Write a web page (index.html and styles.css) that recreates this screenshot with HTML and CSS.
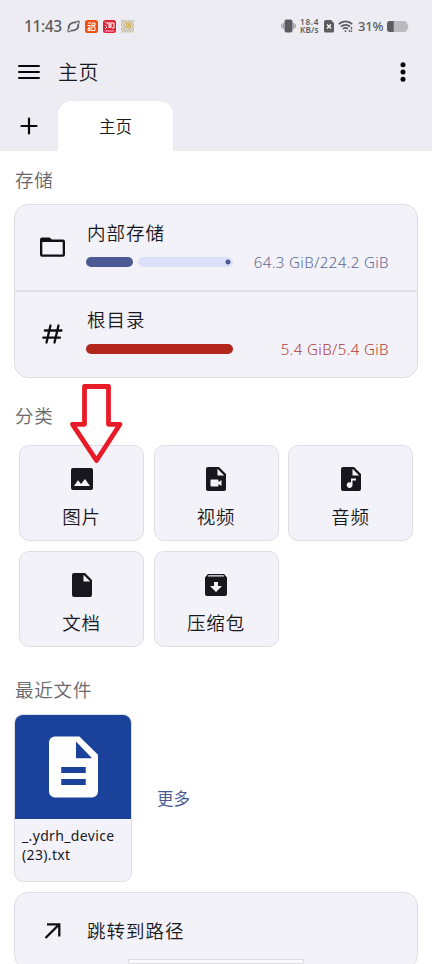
FILE: index.html
```html
<!DOCTYPE html>
<html lang="zh-CN">
<head>
<meta charset="utf-8">
<meta name="viewport" content="width=device-width">
<title>主页</title>
<link rel="stylesheet" href="styles.css">
</head>
<body>
<div class="screen">
  <header class="header">
    <div class="status">
      <span class="clock">11:43</span>
      <svg class="s-orbit" width="13" height="13" viewBox="0 0 14 14" fill="none" stroke="#5c5c60"><path d="M2 9.500C1 5 5 2 10 2.500M12 4.500C13 9 9 12 4 11.500" stroke-width="1.900"/><path d="M1.800 12.800C.5 12.800.5 11.500 1.500 9.500M12.400 4.500C13.500 2.500 13.500 1.200 12.200 1.200 11.500 1.200 10.700 1.800 10 2.500M1.800 12.800C2.500 12.800 3.200 12.200 4 11.500" stroke-width="1.100"/></svg>
      <svg class="s-app" width="13" height="13" viewBox="0 0 13 13"><rect width="13" height="13" rx="2.500" fill="#ec5012"/><g fill="none" stroke="#fff"><path d="M3 3h3M2.500 5.500h3L3.500 8M7 3h3v2.500H7zM6 7h4v3.500H6zM3 8.500h2v2H3z"/></g></svg>
      <svg class="s-app" width="13" height="13" viewBox="0 0 13 13"><rect width="13" height="13" rx="2.500" fill="#df2638"/><path d="M2 2l1.500 1M2 5l1.500 1M2 9l2-2M5 2L4 4M5 3h6v5H9M5 5h4M5 7h4M7 3v5" fill="none" stroke="#fff"/><path d="M2 11h9" stroke="#f48ba6" stroke-width="1.500"/></svg>
      <svg class="s-app" width="13" height="13" viewBox="0 0 13 13"><rect width="13" height="13" rx="1" fill="#e2ddd0"/><g fill="none" stroke="#a99c80" stroke-dasharray="1 1.300 1.500 1"><path d="M0 1h13M1 3h12M0 5h13M1.500 7h12M0 9h13M1 11h12"/></g><path d="M5 4h4v3H5" fill="none" stroke="#d7b838" stroke-width="1.300"/></svg>
      <span class="spacer"></span>
      <svg width="15" height="14" viewBox="0 0 15 14" fill="#5c5c60"><rect x="3.500" y=".5" width="8" height="13" rx="2"/><path d="M1.800 4h1v6h-1zM12.200 4h1v6h-1z" opacity=".7"/><path d="M.2 5.500h1v3h-1zM13.800 5.500h1v3h-1z" opacity=".7"/></svg>
      <svg class="speed" width="19" height="18" viewBox="0 0 19 18"><text x="0" y="8" textLength="18.500">18.4</text><text x="0" y="16" textLength="18.500">KB/s</text></svg>
      <svg class="s-sim" width="10" height="13" viewBox="0 0 10 13"><path d="M2 0h5l3 3v8a1.500 1.500 0 0 1-1.500 1.500h-7A1.500 1.500 0 0 1 0 11V2a2 2 0 0 1 2-2z" fill="#5c5c60"/><path d="M3 4.500l4 4M7 4.500l-4 4" stroke="#fff" stroke-width="1.400"/></svg>
      <svg class="s-wifi" width="16" height="13" viewBox="0 0 16 13" fill="none" stroke="#5c5c60" stroke-width="1.700"><path d="M.8 4.200a9.500 9.500 0 0 1 13.400 0M2.900 6.700a6.500 6.500 0 0 1 9.200 0M5 9a3.500 3.500 0 0 1 5 0"/><path d="M6 10.500h3L7.500 12.500z" fill="#5c5c60" stroke="none"/><path d="M13.500 7v2.500M13.500 10.500V12M11.500 10v2" stroke-width="1.300"/></svg>
      <span class="percent">31%</span>
      <svg class="s-batt" width="22" height="11" viewBox="0 0 22 11"><path d="M3 0h14.500Q20 0 20 2.500l1.200 1.500v3L20 8.500Q20 11 17.500 11H3a3 3 0 0 1-3-3V3a3 3 0 0 1 3-3z" fill="#bababf"/><path d="M3 0h3.700v11H3a3 3 0 0 1-3-3V3a3 3 0 0 1 3-3z" fill="#5c5c60"/></svg>
    </div>
    <div class="toolbar">
      <svg width="22" height="16" viewBox="0 0 22 16" stroke="#08080c" stroke-width="2.200" stroke-linecap="round"><path d="M1.100 2h19.800M1.100 8h19.800M1.100 14h19.800"/></svg>
      <h1 class="title">主页</h1>
      <svg class="more-icon" width="6" height="20" viewBox="0 0 6 20" fill="#08080c"><circle cx="3" cy="2.700" r="2.500"/><circle cx="3" cy="10" r="2.500"/><circle cx="3" cy="17.300" r="2.500"/></svg>
    </div>
    <div class="tabs">
      <svg class="add" width="18" height="18" viewBox="0 0 18 18" stroke="#08080c" stroke-width="2.200" stroke-linecap="round"><path d="M9 1.500v15M1.500 9h15"/></svg>
      <div class="tab">主页</div>
    </div>
  </header>

  <main class="content">
    <h2 class="section">存储</h2>
    <div class="storage">
      <div class="volume">
        <svg class="volume-icon" width="25" height="20" viewBox="0 0 25 20"><path d="M2 .6h7.500L12 2.500H23a2 2 0 0 1 2 2v13.300a2 2 0 0 1-2 2H2a2 2 0 0 1-2-2V2.500A2 2 0 0 1 2 .6zM2.300 4.900V17.600h20.400V4.900z" fill="#101014" fill-rule="evenodd"/></svg>
        <div class="volume-body">
          <div class="label">内部存储</div>
          <div class="usage">
            <div class="meter"><span class="used"></span><span class="free"></span></div>
            <span class="amount">64.3 GiB/224.2 GiB</span>
          </div>
        </div>
      </div>
      <div class="volume volume-full">
        <svg class="volume-icon" width="25" height="20" viewBox="0 0 25 20" fill="none" stroke="#101014" stroke-width="2.300" stroke-linecap="round"><path d="M10.500 1.500L6.500 18.500M18.500 1.500l-4 17M4.800 6.500H21.500M3.300 13.700H20"/></svg>
        <div class="volume-body">
          <div class="label">根目录</div>
          <div class="usage">
            <div class="meter"><span class="used"></span></div>
            <span class="amount">5.4 GiB/5.4 GiB</span>
          </div>
        </div>
      </div>
    </div>

    <div class="category-head">
      <h2 class="section">分类</h2>
      <svg class="pointer" width="56" height="82" viewBox="0 0 56 82" fill="none" stroke="#e81c28" stroke-width="4.800" stroke-linejoin="round"><path d="M15.500 3.500h24v37.800H51L27.500 77.500 3.500 41.300h12z"/></svg>
    </div>
    <div class="grid">
      <div class="tile"><svg viewBox="0 0 24 24"><path fill="#17171d" fill-rule="evenodd" d="M3 1h18a2 2 0 0 1 2 2v18a2 2 0 0 1-2 2H3a2 2 0 0 1-2-2V3a2 2 0 0 1 2-2zM4 19h16l-5-7-4 5-3-3.800z"/></svg><span>图片</span></div>
      <div class="tile"><svg viewBox="0 0 24 24"><path fill="#17171d" fill-rule="evenodd" d="M4 0h11l7 7v15a2 2 0 0 1-2 2H4a2 2 0 0 1-2-2V2a2 2 0 0 1 2-2zM13.500 1.800V8.500h6.700zM7.500 12.500a1 1 0 0 0-1 1v5a1 1 0 0 0 1 1h6a1 1 0 0 0 1-1v-1.500l3 2v-6l-3 2v-1.500a1 1 0 0 0-1-1z"/></svg><span>视频</span></div>
      <div class="tile"><svg viewBox="0 0 24 24"><path fill="#17171d" fill-rule="evenodd" d="M4 0h11l7 7v15a2 2 0 0 1-2 2H4a2 2 0 0 1-2-2V2a2 2 0 0 1 2-2zM13.500 1.800V8.500h6.700zM12 11.500v4a2.900 2.900 0 1 0 1.500 2.500v-4.500H17v-2z"/></svg><span>音频</span></div>
      <div class="tile"><svg viewBox="0 0 24 24"><path fill="#17171d" fill-rule="evenodd" d="M4 0h11l7 7v15a2 2 0 0 1-2 2H4a2 2 0 0 1-2-2V2a2 2 0 0 1 2-2zM13.500 1.800V8.500h6.700z"/></svg><span>文档</span></div>
      <div class="tile"><svg viewBox="0 0 24 24"><path fill="#17171d" fill-rule="evenodd" d="M4 1h16l3 3.500V21a2 2 0 0 1-2 2H3a2 2 0 0 1-2-2V4.500zM4.500 2.300L3.800 3.400h16.400l-.7-1.100zM10 9v4H6l6 6 6-6h-4V9z"/></svg><span>压缩包</span></div>
    </div>

    <h2 class="section recent-head">最近文件</h2>
    <div class="recent">
      <div class="file">
        <div class="thumb"><svg width="49" height="62" viewBox="0 0 50 62"><path fill="#fff" fill-rule="evenodd" d="M6 0h25l19 18.500V56a6 6 0 0 1-6 6H6a6 6 0 0 1-6-6V6a6 6 0 0 1 6-6zM27.500 5v17H44zM12.500 31v6H37.500v-6zM12.500 43.300v6H37.500v-6z"/></svg></div>
        <div class="filename">_.ydrh_device<br>(23).txt</div>
      </div>
      <span class="more">更多</span>
    </div>

    <div class="jump">
      <svg class="jump-icon" width="18" height="18" viewBox="0 0 18 18" fill="none" stroke="#101014" stroke-width="2.300"><path d="M1.500 16L15 2.500M3 2.300H15.300V14.500"/></svg>
      <span class="label">跳转到路径</span>
    </div>
  </main>
  <div class="handle"></div>
</div>
</body>
</html>
```
FILE: styles.css
```css
* { box-sizing: border-box; }
body {
  margin: 0;
  background: #fff;
  color: #18181d;
  font-family: "Noto Sans", "Noto Sans CJK SC", sans-serif;
}
svg { display: block; flex: none; }
h1, h2 { margin: 0; font-weight: 350; }
.screen { position: relative; width: 432px; height: 964px; overflow: hidden; }

.header { height: 151px; background: #edecf2; }
.status {
  display: flex;
  align-items: center;
  height: 52px;
  padding: 0 23px 0 24px;
  color: #5c5c60;
}
.clock { width: 37px; font-size: 15.5px; font-weight: 500; letter-spacing: -.4px; white-space: nowrap; }
.s-orbit { margin-left: 6px; }
.s-app { margin-left: 5px; }
.spacer { flex: 1; }
.speed { margin-left: 4px; overflow: visible; fill: #5c5c60; font-size: 8.2px; font-weight: 600; }
.s-sim { margin-left: 5px; }
.s-wifi { margin-left: 4px; }
.percent { width: 25px; margin-left: 4px; font-size: 13px; font-weight: 500; letter-spacing: -.2px; white-space: nowrap; }
.s-batt { margin-left: 4px; }

.toolbar { display: flex; align-items: center; height: 40px; padding: 0 26px 0 18px; }
.title { margin-left: 18px; padding-top: 1px; font-size: 20px; line-height: 40px; letter-spacing: .4px; }
.more-icon { margin-left: auto; }
.tabs { display: flex; align-items: center; height: 59px; padding: 9px 0 0 20px; }
.tab {
  width: 115px;
  height: 50px;
  margin-left: 20px;
  border-radius: 14px 14px 0 0;
  background: #fff;
  font-size: 16.5px;
  font-weight: 350;
  line-height: 51px;
  text-align: center;
}

.content { padding: 14px 14px 0; }
.section { height: 30px; padding-left: 1px; font-size: 18.5px; line-height: 30px; letter-spacing: .8px; color: #68686c; }
.storage {
  width: 404px;
  height: 174px;
  margin-top: 9px;
  border: 1px solid #dfdee5;
  border-radius: 14px;
  background: #f3f2f9;
}
.volume { display: flex; height: 85px; padding: 14px 28px 0 25px; }
.volume-full { height: 87px; border-top: 2px solid #e1e0e7; }
.volume-icon { margin-top: 18px; }
.volume-body { flex: 1; margin-left: 22px; }
.label { font-size: 18.5px; line-height: 28px; letter-spacing: 1px; font-weight: 350; }
.usage { display: flex; align-items: center; justify-content: space-between; height: 28px; margin-top: 1px; }
.meter { display: flex; gap: 5px; width: 147px; margin-left: -1px; }
.used { width: 47px; height: 10px; border-radius: 5px; background: #4b5a92; }
.free {
  flex: 1;
  height: 10px;
  border-radius: 5px;
  background: radial-gradient(circle at 90px 5px, #4b5a92 2.2px, #dde0f9 2.8px);
}
.volume-full .used { width: 147px; background: #b3261e; }
.amount { font-size: 15px; font-weight: 350; letter-spacing: .4px; line-height: 28px; color: #5b6796; white-space: nowrap; }
.volume-full .amount { color: #ad3c39; }

.category-head { position: relative; margin-top: 23px; }
.pointer { position: absolute; left: 55px; top: -18px; }
.grid { display: grid; grid-template-columns: repeat(3, 125px); gap: 10px 9.5px; margin: 14px 0 0 5px; }
.tile {
  display: flex;
  flex-direction: column;
  align-items: center;
  height: 96px;
  padding-top: 21px;
  border: 1px solid #dfdee5;
  border-radius: 10px;
  background: #f3f2f9;
  font-size: 18.5px;
  font-weight: 350;
  line-height: 28px;
  letter-spacing: .8px;
}
.tile svg { width: 24px; height: 24px; }
.tile span { margin-top: 12px; }

.recent-head { margin-top: 28px; }
.recent { display: flex; align-items: center; gap: 25px; margin-top: 9px; }
.file {
  width: 118px;
  height: 168px;
  overflow: hidden;
  border: 1px solid #dfdee5;
  border-radius: 9px;
  background: #f3f2f9;
}
.thumb { display: flex; align-items: center; justify-content: center; height: 104px; background: #1b429a; }
.filename { padding: 7px 0 0 7px; font-size: 14px; line-height: 19px; letter-spacing: .35px; white-space: nowrap; }
.more { color: #4b5a92; font-size: 16.5px; }

.jump {
  display: flex;
  align-items: center;
  width: 404px;
  height: 77px;
  margin-top: 10px;
  padding-left: 29px;
  border: 1px solid #dfdee5;
  border-radius: 14px;
  background: #f3f2f9;
}
.jump .label { margin-left: 25px; }
.handle {
  position: absolute;
  left: 128px;
  top: 959px;
  width: 176px;
  height: 5px;
  border: 1px solid #dcdbe2;
  border-radius: 2px;
  background: #fafafc;
}
```
